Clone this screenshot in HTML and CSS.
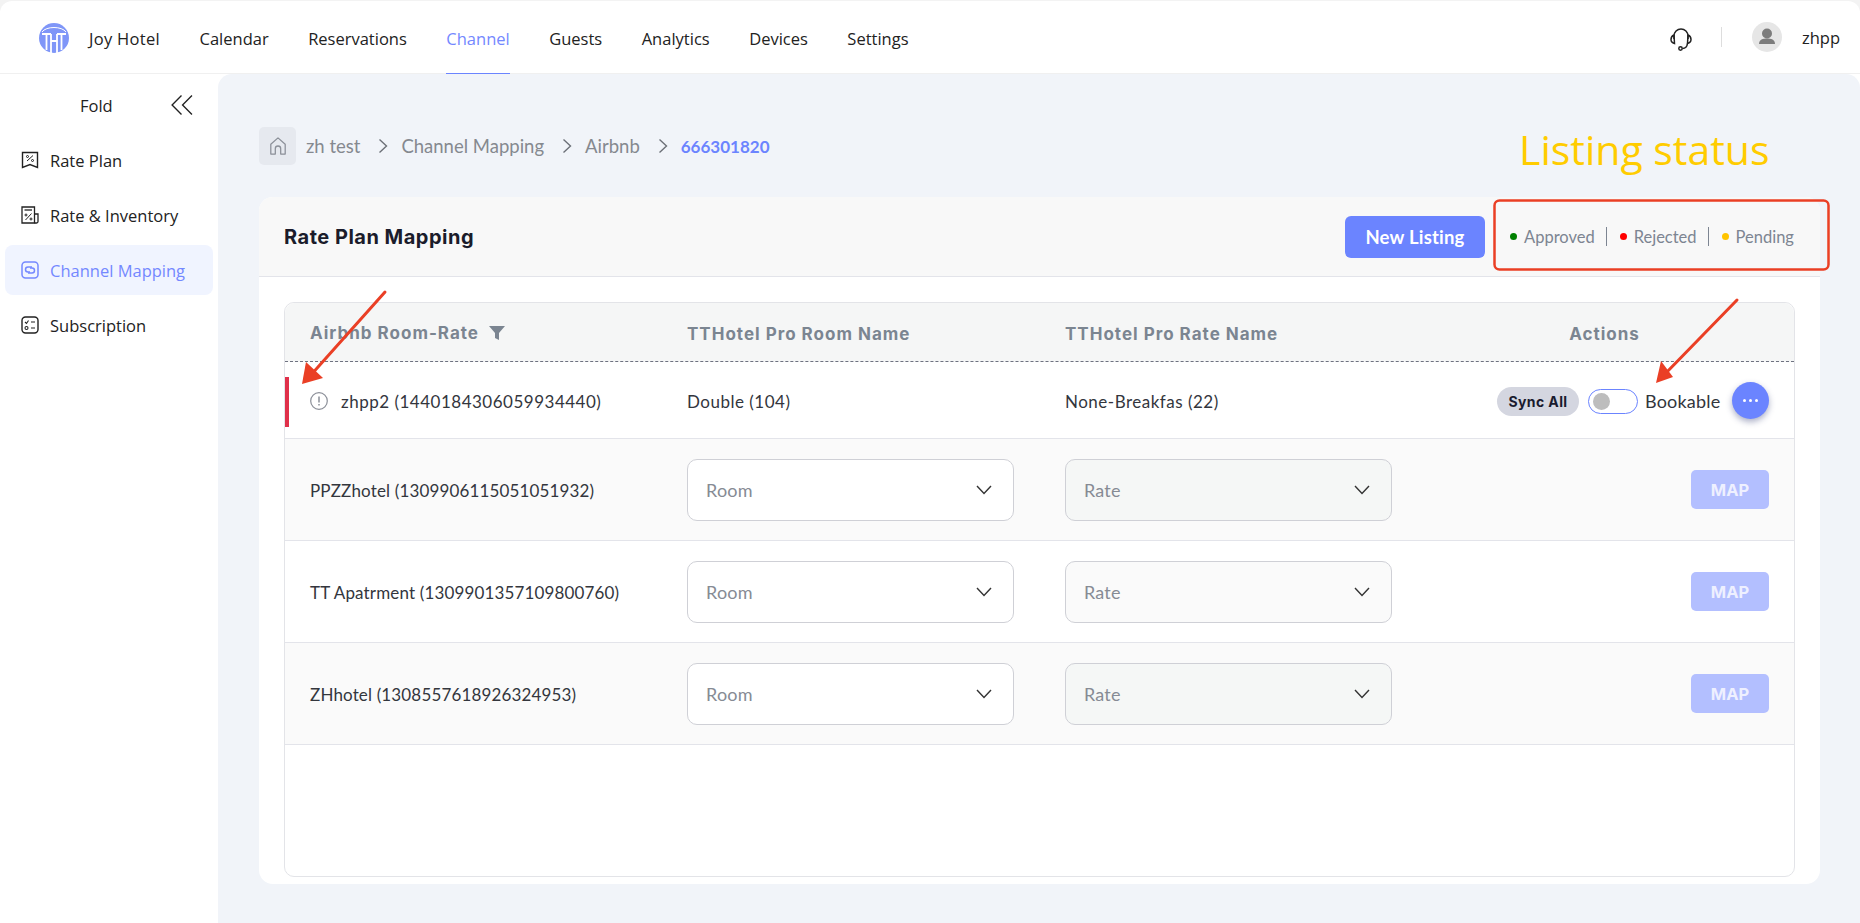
FILE: index.html
```html
<!DOCTYPE html>
<html lang="en">
  <head>
    <meta charset="UTF-8" />
    <meta name="viewport" content="width=device-width, initial-scale=1.0" />
    <title>Rate Plan Mapping</title>
    <link rel="stylesheet" href="styles.css">
  </head>
  <body>
    <div class="page">
      <header class="topbar">
        <svg class="logo" viewBox="0 0 30 30">
          <circle cx="15" cy="15" r="15" fill="#7f96f8" />
          <path d="M3 9 C7 3 23 3 27 9" fill="none" stroke="#fff" stroke-width="1" />
          <path d="M3 11 H12 M18 11 H27" stroke="#fff" stroke-width="1.800" />
          <path d="M7.500 11 V27 M12 11 V30 M18 11 V30 M22.500 11 V27 M12 18 H18" stroke="#fff" stroke-width="1.800" fill="none" />
        </svg>
        <nav class="main-nav">
          <a href="#" class="brand">Joy Hotel</a>
          <a href="#">Calendar</a>
          <a href="#">Reservations</a>
          <a href="#" class="active">Channel</a>
          <a href="#">Guests</a>
          <a href="#">Analytics</a>
          <a href="#">Devices</a>
          <a href="#">Settings</a>
        </nav>
        <div class="top-right">
          <svg class="headset" viewBox="0 0 22 24" fill="none" stroke="#222" stroke-width="1.500">
            <path d="M4 12 V9 a7 7 0 0 1 14 0 V12" />
            <path d="M4 8 C1.500 9 1 11 1 12.500 C1 15 2.500 16 4.500 16.500 Z" />
            <path d="M18 8 C20.500 9 21 11 21 12.500 C21 15 19.500 16 17.500 16.500 Z" />
            <path d="M17.500 16.500 C17 20 15 21.500 12.500 21.500" />
            <circle cx="10.500" cy="21.500" r="1.700" />
          </svg>
          <span class="top-sep"></span>
          <span class="avatar">
            <svg viewBox="0 0 30 30" fill="#7c7c7c">
              <circle cx="15" cy="11.500" r="5" />
              <path d="M7 22 C7 17.500 11 16.500 15 16.500 C19 16.500 23 17.500 23 22 Z" />
            </svg>
          </span>
          <span class="username">zhpp</span>
        </div>
      </header>

      <div class="layout">
        <aside class="sidebar">
          <div class="fold-row">
            <span>Fold</span>
            <svg viewBox="0 0 22 20" fill="none" stroke="#222" stroke-width="1.300">
              <path d="M11 1 L2 10 L11 19" />
              <path d="M21 1 L12 10 L21 19" />
            </svg>
          </div>
          <a href="#" class="side-item">
            <svg viewBox="0 0 18 18" fill="none" stroke="#222" stroke-width="1.400">
              <path d="M1.500 1.500 H16.500 V16.500 L9 13.500 L1.500 16.500 Z" />
              <path d="M6 10 L12 4.500" stroke-width="1" />
              <circle cx="6.500" cy="5.500" r="1" stroke-width="1" />
              <circle cx="11.500" cy="9.500" r="1" stroke-width="1" />
            </svg>
            Rate Plan
          </a>
          <a href="#" class="side-item">
            <svg viewBox="0 0 18 18" fill="none" stroke="#222" stroke-width="1.300">
              <path d="M1 1 H13.500 V17 H1 Z" />
              <path d="M13.500 8 H17 V15.500 Q17 17 15.500 17 H13.500" />
              <path d="M3.500 4 H11" />
              <path d="M4.500 14 L10.500 7.500" stroke-width="1" />
              <circle cx="5" cy="9" r="1" stroke-width="1" />
              <circle cx="10" cy="13" r="1" stroke-width="1" />
            </svg>
            Rate &amp; Inventory
          </a>
          <a href="#" class="side-item current">
            <svg viewBox="0 0 18 18" fill="none" stroke="#7488ff" stroke-width="1.500">
              <rect x="1" y="1" width="16" height="16" rx="3.500" />
              <path d="M11 6 H7 a2.500 2.500 0 0 0 0 5 H9" />
              <path d="M7 12 H11 a2.500 2.500 0 0 0 0 -5 H9" />
            </svg>
            Channel Mapping
          </a>
          <a href="#" class="side-item">
            <svg viewBox="0 0 18 18" fill="none" stroke="#222" stroke-width="1.400">
              <rect x="1" y="1" width="16" height="16" rx="3.500" />
              <path d="M4 6 L5.500 7.500 L7.500 4.500" stroke-width="1.100" />
              <path d="M10 6 H14 M10 12 H14" stroke-width="1.100" />
              <circle cx="5.500" cy="12" r="1.500" stroke-width="1.100" />
            </svg>
            Subscription
          </a>
        </aside>

        <main class="content">
          <div class="breadcrumb">
            <span class="home-tile">
              <svg viewBox="0 0 20 22" fill="none" stroke="#8b8f98" stroke-width="1.400">
                <path d="M2 20 V9 L10 2 L18 9 V20 H13 V14 a3 3 0 0 0 -6 0 V20 Z" stroke-linejoin="round" />
              </svg>
            </span>
            <span>zh test</span>
            <svg class="crumb-arrow" viewBox="0 0 10 16" fill="none" stroke="#6c7078" stroke-width="1.400"><path d="M1.500 1.500 L8.500 8 L1.500 14.500" /></svg>
            <span>Channel Mapping</span>
            <svg class="crumb-arrow" viewBox="0 0 10 16" fill="none" stroke="#6c7078" stroke-width="1.400"><path d="M1.500 1.500 L8.500 8 L1.500 14.500" /></svg>
            <span>Airbnb</span>
            <svg class="crumb-arrow" viewBox="0 0 10 16" fill="none" stroke="#6c7078" stroke-width="1.400"><path d="M1.500 1.500 L8.500 8 L1.500 14.500" /></svg>
            <span class="crumb-current">666301820</span>
          </div>

          <section class="card">
            <div class="card-head">
              <h2>Rate Plan Mapping</h2>
              <button class="btn-new">New Listing</button>
              <ul class="legend">
                <li><i class="dot dot-green"></i>Approved</li>
                <li><i class="dot dot-red"></i>Rejected</li>
                <li><i class="dot dot-yellow"></i>Pending</li>
              </ul>
            </div>

            <div class="table-box">
              <div class="row row-head">
                <div class="cell">
                  Airbnb Room-Rate
                  <svg class="filter" viewBox="0 0 16 16" fill="#7b8591"><path d="M0 1 H16 L10 8 V15 L6 13 V8 Z" /></svg>
                </div>
                <div class="cell">TTHotel Pro Room Name</div>
                <div class="cell">TTHotel Pro Rate Name</div>
                <div class="cell cell-center">Actions</div>
              </div>

              <div class="row row-mapped">
                <span class="error-bar"></span>
                <div class="cell cell-warn">
                  <svg class="warn" viewBox="0 0 18 18" fill="none" stroke="#8b8f98" stroke-width="1.200">
                    <circle cx="9" cy="9" r="8.300" />
                    <path d="M9 4.500 V10.500 M9 12 V13.500" stroke-width="1.500" />
                  </svg>
                  zhpp2 (1440184306059934440)
                </div>
                <div class="cell">Double (104)</div>
                <div class="cell">None-Breakfas (22)</div>
                <div class="cell cell-actions">
                  <span class="sync">Sync All</span>
                  <span class="toggle"><i></i></span>
                  <span class="bookable">Bookable</span>
                  <span class="more"><i></i><i></i><i></i></span>
                </div>
              </div>

              <div class="row row-alt">
                <div class="cell">PPZZhotel (1309906115051051932)</div>
                <div class="cell">
                  <div class="picker">Room
                    <svg viewBox="0 0 16 10" fill="none" stroke="#333" stroke-width="1.400"><path d="M1 1 L8 8.500 L15 1" /></svg>
                  </div>
                </div>
                <div class="cell">
                  <div class="picker picker-off">Rate
                    <svg viewBox="0 0 16 10" fill="none" stroke="#333" stroke-width="1.400"><path d="M1 1 L8 8.500 L15 1" /></svg>
                  </div>
                </div>
                <div class="cell cell-actions"><button class="btn-map">MAP</button></div>
              </div>

              <div class="row">
                <div class="cell">TT Apatrment (1309901357109800760)</div>
                <div class="cell">
                  <div class="picker">Room
                    <svg viewBox="0 0 16 10" fill="none" stroke="#333" stroke-width="1.400"><path d="M1 1 L8 8.500 L15 1" /></svg>
                  </div>
                </div>
                <div class="cell">
                  <div class="picker picker-off">Rate
                    <svg viewBox="0 0 16 10" fill="none" stroke="#333" stroke-width="1.400"><path d="M1 1 L8 8.500 L15 1" /></svg>
                  </div>
                </div>
                <div class="cell cell-actions"><button class="btn-map">MAP</button></div>
              </div>

              <div class="row row-alt">
                <div class="cell">ZHhotel (1308557618926324953)</div>
                <div class="cell">
                  <div class="picker">Room
                    <svg viewBox="0 0 16 10" fill="none" stroke="#333" stroke-width="1.400"><path d="M1 1 L8 8.500 L15 1" /></svg>
                  </div>
                </div>
                <div class="cell">
                  <div class="picker picker-off">Rate
                    <svg viewBox="0 0 16 10" fill="none" stroke="#333" stroke-width="1.400"><path d="M1 1 L8 8.500 L15 1" /></svg>
                  </div>
                </div>
                <div class="cell cell-actions"><button class="btn-map">MAP</button></div>
              </div>
            </div>
          </section>
        </main>
      </div>

      <!-- red notes drawn over the screenshot -->
      <div class="note-title">Listing status</div>
      <svg class="notes" viewBox="0 0 1860 923" fill="none" stroke="#ea3f25">
        <rect x="1494.500" y="200.500" width="334" height="69" rx="5" stroke-width="2.500" />
        <path d="M385 292 L310 376" stroke-width="3" stroke-linecap="round" />
        <path d="M302 384 L306 362 L323 378 Z" fill="#ea3f25" stroke="none" />
        <path d="M1737 300 L1664 375" stroke-width="3" stroke-linecap="round" />
        <path d="M1656 383 L1661 361 L1673 377 Z" fill="#ea3f25" stroke="none" />
      </svg>
    </div>
  </body>
</html>
```

FILE: styles.css
```css
/* Reset CSS */
* {
  box-sizing: border-box;
}

body {
  margin: 0;
  background-color: #f3f3f3;
  font-family: "Lato", sans-serif;
  color: #33363d;
}

a {
  text-decoration: none;
  color: inherit;
}

h2 {
  margin: 0;
}

/* Page */
.page {
  position: relative;
  width: 1860px;
  height: 923px;
  padding-top: 1px;
  overflow: hidden;
}

/* Top bar */
.topbar {
  display: flex;
  align-items: center;
  height: 73px;
  padding-left: 39px;
  background-color: #fff;
  border-radius: 12px 12px 0 0;
  border-bottom: 1px solid #f0f0f0;
}

.logo {
  width: 30px;
  height: 30px;
  margin-right: 20px;
  margin-top: 2px;
}

.main-nav {
  display: flex;
  gap: 39.500px;
  height: 100%;
  font-family: "Open Sans", sans-serif;
  font-size: 16.500px;
  color: #222;
}

.main-nav a {
  display: flex;
  align-items: center;
  height: 74px;
  padding-top: 1px;
}

.main-nav a.brand {
  letter-spacing: 0.300px;
}

.main-nav a.active {
  color: #7488ff;
  border-bottom: 2px solid #6b84ff;
  padding-top: 2px;
}

.top-right {
  display: flex;
  align-items: center;
  margin-left: auto;
  padding-right: 20px;
  font-family: "Open Sans", sans-serif;
  font-size: 16.500px;
  color: #222;
}

.headset {
  width: 22px;
  height: 24px;
  margin-top: 4px;
}

.top-sep {
  width: 1px;
  height: 20px;
  margin: 0 30px 0 29px;
  background-color: #ddd;
}

.avatar {
  display: flex;
  width: 30px;
  height: 30px;
  border-radius: 50%;
  background-color: #e6e6e6;
}

.username {
  margin-left: 20px;
}

/* Sidebar */
.layout {
  display: flex;
  height: 849px;
  background-color: #fff;
}

.sidebar {
  width: 218px;
  padding: 5px 5px 0;
  font-family: "Open Sans", sans-serif;
  font-size: 16.500px;
  color: #222;
}

.fold-row {
  display: flex;
  align-items: center;
  height: 52px;
  padding-left: 75px;
  margin-bottom: 4px;
}

.fold-row svg {
  width: 23px;
  height: 22px;
  margin-left: 57px;
}

.side-item {
  display: flex;
  align-items: center;
  gap: 11px;
  height: 50px;
  padding-left: 16px;
  margin-bottom: 5px;
  border-radius: 8px;
}

.side-item svg {
  width: 18px;
  height: 18px;
}

.side-item.current {
  background-color: #f0f4ff;
  color: #7488ff;
}

/* Content */
.content {
  flex: 1;
  padding: 53px 40px 0 41px;
  background-color: #f1f4f9;
  border-radius: 14px 14px 0 0;
}

.breadcrumb {
  display: flex;
  align-items: center;
  height: 38px;
  margin-bottom: 32px;
  font-size: 18.500px;
  color: #85898f;
}

.home-tile {
  display: flex;
  align-items: center;
  justify-content: center;
  width: 37px;
  height: 38px;
  margin-right: 10px;
  background-color: #e6e9ef;
  border-radius: 5px;
}

.home-tile svg {
  width: 18px;
  height: 20px;
}

.crumb-arrow {
  width: 10px;
  height: 16px;
  margin: 0 13px 0 18px;
}

.crumb-current {
  font-size: 17px;
  font-weight: 700;
  color: #6b84ff;
}

/* Card */
.card {
  height: 687px;
  background-color: #fff;
  border-radius: 14px;
}

.card-head {
  display: flex;
  align-items: center;
  height: 80px;
  padding-left: 25px;
  background-color: #f8f8f8;
  border-bottom: 1px solid #e3e4ea;
  border-radius: 14px 14px 0 0;
}

.card-head h2 {
  margin-right: auto;
  font-family: "Inter", sans-serif;
  font-size: 20px;
  font-weight: 700;
  letter-spacing: 0.500px;
  color: #1b1c2b;
}

.btn-new {
  width: 140px;
  height: 42px;
  margin-right: 15px;
  border: 0;
  border-radius: 6px;
  background-color: #6b84ff;
  color: #fff;
  font-family: inherit;
  font-size: 18.500px;
  font-weight: 700;
  letter-spacing: 0.200px;
}

.legend {
  display: flex;
  align-items: center;
  width: 320px;
  margin: 0;
  padding: 0 0 0 10px;
  list-style: none;
  font-size: 16.500px;
  color: #7d8592;
}

.legend li {
  display: flex;
  align-items: center;
  height: 19px;
  padding-right: 11px;
  margin-right: 13px;
  border-right: 1px solid #7d8592;
}

.legend li:last-child {
  border-right: 0;
}

.dot {
  width: 7px;
  height: 7px;
  margin-right: 7px;
  border-radius: 50%;
}

.dot-green {
  background-color: #008000;
}

.dot-red {
  background-color: #ff0000;
}

.dot-yellow {
  background-color: #ffc400;
}

/* Table */
.table-box {
  height: 575px;
  margin: 25px 25px 0;
  border: 1px solid #e3e4e8;
  border-radius: 10px;
}

.row {
  position: relative;
  display: grid;
  grid-template-columns: 402px 378px 350px 1fr;
  align-items: center;
  height: 102px;
  border-bottom: 1px solid #e3e4ea;
  font-size: 17px;
  letter-spacing: 0.150px;
}

.cell {
  display: flex;
  align-items: center;
}

.row > .cell:first-of-type {
  padding-left: 25px;
  padding-top: 2px;
}

.row-head {
  height: 59px;
  background-color: #f5f6f6;
  border-bottom: 1px dashed #6e7280;
  border-radius: 10px 10px 0 0;
  font-family: "Inter", sans-serif;
  font-size: 17px;
  font-weight: 700;
  letter-spacing: 1px;
  color: #7b8591;
}

.row-head .cell {
  padding-top: 3px;
}

.row-head .cell-center {
  justify-content: center;
}

.filter {
  width: 16px;
  height: 16px;
  margin-left: 10px;
}

.row-mapped {
  height: 77px;
  letter-spacing: 0.500px;
}

.row-mapped .cell {
  padding-top: 2px;
}

.row-alt {
  background-color: #fafafa;
}

.error-bar {
  position: absolute;
  top: 15px;
  left: 0;
  width: 4px;
  height: 50px;
  background-color: #e0304a;
}

.row > .cell-warn {
  padding-left: 27px;
}

.warn {
  width: 18px;
  height: 18px;
  margin-right: 13px;
}

.cell-actions {
  justify-content: flex-end;
  padding-right: 25px;
}

.sync {
  width: 82px;
  height: 29px;
  margin-right: 9px;
  border-radius: 15px;
  background-color: #d4d6e0;
  color: #1a1b2e;
  font-family: "Inter", sans-serif;
  font-size: 14px;
  font-weight: 700;
  letter-spacing: 0.400px;
  line-height: 29px;
  text-align: center;
}

.toggle {
  display: flex;
  align-items: center;
  width: 50px;
  height: 25px;
  padding-left: 4px;
  margin-right: 7px;
  border: 1px solid #6b84ff;
  border-radius: 13px;
  background-color: #fff;
}

.toggle i {
  width: 17px;
  height: 17px;
  border-radius: 50%;
  background-color: #bdbdbd;
}

.bookable {
  width: 77px;
  margin-right: 10px;
  font-size: 18px;
  letter-spacing: 0.200px;
  white-space: nowrap;
}

.more {
  display: flex;
  align-items: center;
  justify-content: center;
  gap: 3px;
  width: 37px;
  height: 37px;
  margin-top: -2px;
  border-radius: 50%;
  background-color: #6b84ff;
  box-shadow: 0 3px 6px rgba(70, 80, 130, 0.45);
}

.more i {
  width: 3px;
  height: 3px;
  border-radius: 50%;
  background-color: #fff;
}

.picker {
  display: flex;
  align-items: center;
  justify-content: space-between;
  width: 327px;
  height: 62px;
  padding: 1px 21px 0 18px;
  border: 1px solid #cfd0d6;
  border-radius: 10px;
  background-color: #fff;
  font-size: 18px;
  letter-spacing: 0.200px;
  color: #868b94;
}

.picker svg {
  width: 16px;
  height: 10px;
  margin-top: -1px;
}

.picker-off {
  background-color: #fafafa;
}

.row-alt .picker-off {
  background-color: #f5f7f6;
}

.btn-map {
  width: 78px;
  height: 39px;
  border: 0;
  border-radius: 5px;
  background-color: #b3bfff;
  color: #eef0ff;
  font-family: "Inter", sans-serif;
  font-size: 16.500px;
  font-weight: 700;
}

/* Notes over the page */
.notes {
  position: absolute;
  top: 0;
  left: 0;
  width: 1860px;
  height: 923px;
  pointer-events: none;
}

.note-title {
  position: absolute;
  top: 119px;
  left: 1519px;
  font-family: "Open Sans", sans-serif;
  font-size: 41px;
  line-height: 60px;
  color: #ffcc00;
}
```
